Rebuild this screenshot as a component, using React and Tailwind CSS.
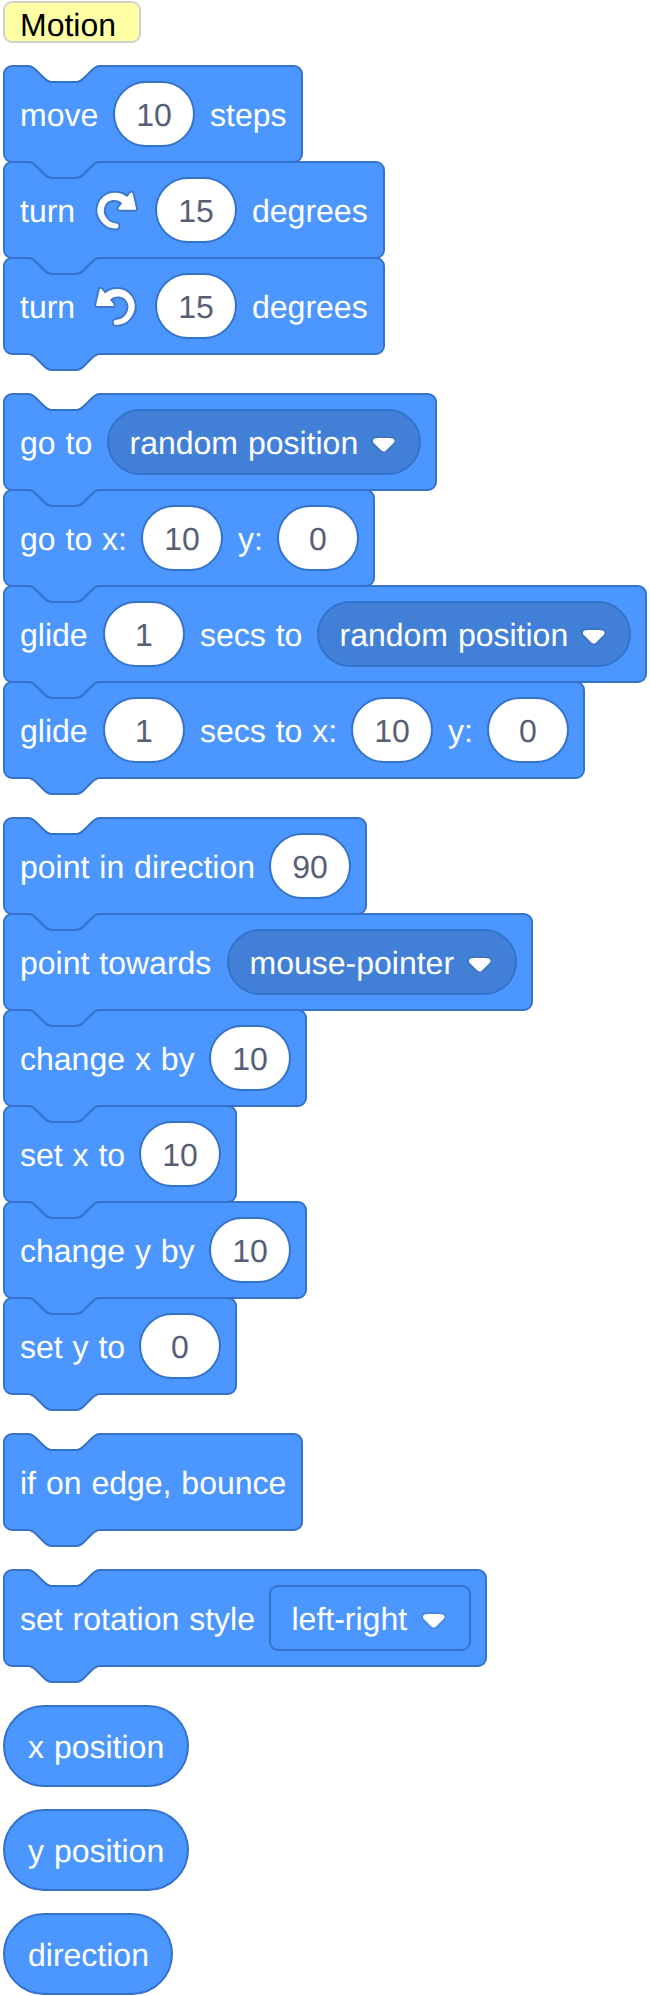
import React from "react";

const NOTCH_TOP =
  "c4 0 6 2 8 4 l8 8 c2 2 4 4 8 4 h24 c4 0 6 -2 8 -4 l8 -8 c2 -2 4 -4 8 -4";
const NOTCH_BOTTOM =
  "c-4 0 -6 2 -8 4 l-8 8 c-2 2 -4 4 -8 4 h-24 c-4 0 -6 -2 -8 -4 l-8 -8 c-2 -2 -4 -4 -8 -4";

function Block({ width, children }) {
  const d = `M0 8 A8 8 0 0 1 8 0 H24 ${NOTCH_TOP} H${width - 8} a8 8 0 0 1 8 8 V88 a8 8 0 0 1 -8 8 H96 ${NOTCH_BOTTOM} H8 a8 8 0 0 1 -8 -8 Z`;
  return (
    <div className="relative h-24" style={{ width }}>
      <svg
        className="absolute inset-0 overflow-visible"
        width={width}
        height="96"
        aria-hidden="true"
      >
        <path d={d} fill="#4c97ff" stroke="#3373cc" strokeWidth="2" />
      </svg>
      <div className="relative flex h-24 items-center gap-4 px-4">{children}</div>
    </div>
  );
}

function Stack({ children }) {
  return <section className="flex flex-col items-start pb-4">{children}</section>;
}

function Label({ className = "", children }) {
  return (
    <span className={`h-16 shrink-0 whitespace-nowrap leading-[66px] text-white ${className}`}>
      {children}
    </span>
  );
}

function NumberInput({ children }) {
  return (
    <span className="-m-px h-[66px] w-[82px] shrink-0 rounded-full border-2 border-[#3373cc] bg-white text-center leading-[64px] text-[#575e75]">
      {children}
    </span>
  );
}

function Arrow() {
  return (
    <svg
      className="mt-[5px] shrink-0"
      width="25.42"
      height="17.58"
      viewBox="0 0 12.71 8.79"
      aria-hidden="true"
    >
      <path
        d="M12.71 2.44A2.41 2.41 0 0 1 12 4.16L8.08 8.08a2.45 2.45 0 0 1-3.45 0L.72 4.16A2.42 2.42 0 0 1 0 2.44 2.48 2.48 0 0 1 .71.71C1 .47 1.43 0 6.36 0s5.39.46 5.64.71a2.44 2.44 0 0 1 .71 1.73z"
        fill="#231f20"
        opacity="0.1"
      />
      <path
        d="M6.36 7.79a1.43 1.43 0 0 1-1-.42L1.42 3.45a1.44 1.44 0 0 1 0-2c.56-.56 9.31-.56 9.87 0a1.44 1.44 0 0 1 0 2L7.37 7.37a1.43 1.43 0 0 1-1.01.42z"
        fill="#ffffff"
      />
    </svg>
  );
}

function Dropdown({ className, children }) {
  return (
    <span
      className={`-m-px flex h-[66px] shrink-0 items-center justify-between border-2 border-[#3373cc] pr-[23px] pl-[20.5px] text-white ${className}`}
    >
      <span className="whitespace-nowrap leading-[62px] pt-0.5">{children}</span>
      <Arrow />
    </span>
  );
}

function TurnRight() {
  return (
    <svg className="shrink-0" width="48" height="48" viewBox="0 0 24 24" aria-hidden="true">
      <path
        d="M22.68 12.2a1.6 1.6 0 0 1-1.27.63h-7.69a1.59 1.59 0 0 1-1.16-2.58l1.12-1.41a4.82 4.82 0 0 0-3.14-.77 4.31 4.31 0 0 0-2 .8 4.25 4.25 0 0 0-1.34 1.73 5.06 5.06 0 0 0 .54 4.62A5.58 5.58 0 0 0 12 17.74a2.26 2.26 0 0 1-.16 4.52A10.25 10.25 0 0 1 3.74 18a10.14 10.14 0 0 1-1.49-9.22 9.7 9.7 0 0 1 2.83-4.14A9.92 9.92 0 0 1 9.66 2.5a10.66 10.66 0 0 1 7.72 1.68l1.08-1.35a1.57 1.57 0 0 1 1.24-.6 1.6 1.6 0 0 1 1.54 1.21l1.7 7.37a1.57 1.57 0 0 1-.26 1.39z"
        fill="#3d79cc"
      />
      <path
        d="M21.38 11.83h-7.61a.59.59 0 0 1-.43-1l1.75-2.19a5.9 5.9 0 0 0-4.7-1.58 5.07 5.07 0 0 0-4.11 3.17A6 6 0 0 0 7 15.77a6.51 6.51 0 0 0 5 2.92 1.31 1.31 0 0 1-.08 2.62 9.3 9.3 0 0 1-7.35-3.82 9.16 9.16 0 0 1-1.4-8.37A8.51 8.51 0 0 1 5.71 5.4a8.76 8.76 0 0 1 4.11-1.92 9.71 9.71 0 0 1 7.75 2.07l1.67-2.1a.59.59 0 0 1 1 .21L22 11.08a.59.59 0 0 1-.62.75z"
        fill="#ffffff"
      />
    </svg>
  );
}

function TurnLeft() {
  return (
    <svg className="shrink-0" width="48" height="48" viewBox="0 0 24 24" aria-hidden="true">
      <path
        d="M20.34 18.21a10.24 10.24 0 0 1-8.1 4.22 2.26 2.26 0 0 1-.16-4.52 5.58 5.58 0 0 0 4.25-2.53 5.06 5.06 0 0 0 .54-4.62A4.25 4.25 0 0 0 15.55 9a4.31 4.31 0 0 0-2-.8A4.82 4.82 0 0 0 10.4 9l1.12 1.41A1.59 1.59 0 0 1 10.36 13H2.67a1.56 1.56 0 0 1-1.26-.63A1.54 1.54 0 0 1 1.13 11l1.72-7.43A1.59 1.59 0 0 1 4.38 2.4a1.57 1.57 0 0 1 1.24.6L6.7 4.35a10.66 10.66 0 0 1 7.72-1.68A9.88 9.88 0 0 1 19 4.81 9.61 9.61 0 0 1 21.83 9a10.08 10.08 0 0 1-1.49 9.21z"
        fill="#3d79cc"
      />
      <path
        d="M19.56 17.65a9.29 9.29 0 0 1-7.35 3.83 1.31 1.31 0 0 1-.08-2.62 6.53 6.53 0 0 0 5-2.92 6.05 6.05 0 0 0 .67-5.51 5.32 5.32 0 0 0-1.64-2.16 5.21 5.21 0 0 0-2.48-1A5.86 5.86 0 0 0 9 8.84L10.74 11a.59.59 0 0 1-.43 1H2.7a.6.6 0 0 1-.6-.75l1.71-7.42a.59.59 0 0 1 1-.21l1.67 2.1a9.71 9.71 0 0 1 7.75-2.07 8.84 8.84 0 0 1 4.12 1.92 8.68 8.68 0 0 1 2.54 3.72 9.14 9.14 0 0 1-1.33 8.26z"
        fill="#ffffff"
      />
    </svg>
  );
}

function Reporter({ className, children }) {
  return (
    <div
      className={`-m-px h-[82px] whitespace-nowrap rounded-full border-2 border-[#3373cc] bg-[#4c97ff] pl-[23px] leading-[80px] text-white ${className}`}
    >
      {children}
    </div>
  );
}

export default function App() {
  return (
    <main className="h-[1996px] w-[650px] overflow-hidden bg-white pt-0.5 pl-1 font-['Liberation_Sans',Arial,sans-serif] text-[32px] [text-rendering:geometricPrecision] [word-spacing:1px]">
      <div className="flex flex-col items-start gap-6">
        <div className="-m-px h-[42px] w-[138px] rounded-[9px] border-2 border-[#d0d1d2] bg-[#ffffa5] pl-[15px] leading-[44px] text-black">
          Motion
        </div>

        <Stack>
          <Block width={298}>
            <Label className="w-[78px]">move</Label>
            <NumberInput>10</NumberInput>
            <Label className="w-[76px]">steps</Label>
          </Block>
          <Block width={380}>
            <Label className="w-14">turn</Label>
            <TurnRight />
            <NumberInput>15</NumberInput>
            <Label className="w-[116px]">degrees</Label>
          </Block>
          <Block width={380}>
            <Label className="w-14">turn</Label>
            <TurnLeft />
            <NumberInput>15</NumberInput>
            <Label className="w-[116px]">degrees</Label>
          </Block>
        </Stack>

        <Stack>
          <Block width={432}>
            <Label className="w-[72px]">go to</Label>
            <Dropdown className="w-[314px] rounded-full bg-[#4280d7]">random position</Dropdown>
          </Block>
          <Block width={370}>
            <Label className="w-[106px]">go to x:</Label>
            <NumberInput>10</NumberInput>
            <Label className="w-6">y:</Label>
            <NumberInput>0</NumberInput>
          </Block>
          <Block width={642}>
            <Label className="w-[68px]">glide</Label>
            <NumberInput>1</NumberInput>
            <Label className="w-[102px]">secs to</Label>
            <Dropdown className="w-[314px] rounded-full bg-[#4280d7]">random position</Dropdown>
          </Block>
          <Block width={580}>
            <Label className="w-[68px]">glide</Label>
            <NumberInput>1</NumberInput>
            <Label className="w-[136px]">secs to x:</Label>
            <NumberInput>10</NumberInput>
            <Label className="w-6">y:</Label>
            <NumberInput>0</NumberInput>
          </Block>
        </Stack>

        <Stack>
          <Block width={362}>
            <Label className="w-[234px]">point in direction</Label>
            <NumberInput>90</NumberInput>
          </Block>
          <Block width={528}>
            <Label className="w-[192px]">point towards</Label>
            <Dropdown className="w-[290px] rounded-full bg-[#4280d7]">mouse-pointer</Dropdown>
          </Block>
          <Block width={302}>
            <Label className="w-[174px]">change x by</Label>
            <NumberInput>10</NumberInput>
          </Block>
          <Block width={232}>
            <Label className="w-[104px]">set x to</Label>
            <NumberInput>10</NumberInput>
          </Block>
          <Block width={302}>
            <Label className="w-[174px]">change y by</Label>
            <NumberInput>10</NumberInput>
          </Block>
          <Block width={232}>
            <Label className="w-[104px]">set y to</Label>
            <NumberInput>0</NumberInput>
          </Block>
        </Stack>

        <Stack>
          <Block width={298}>
            <Label className="w-[266px]">if on edge, bounce</Label>
          </Block>
        </Stack>

        <Stack>
          <Block width={482}>
            <Label className="w-[234px]">set rotation style</Label>
            <Dropdown className="w-[202px] rounded-[9px] bg-[#4c97ff]">left-right</Dropdown>
          </Block>
        </Stack>

        <Reporter className="w-[186px]">x position</Reporter>
        <Reporter className="w-[186px]">y position</Reporter>
        <Reporter className="w-[170px]">direction</Reporter>
      </div>
    </main>
  );
}
